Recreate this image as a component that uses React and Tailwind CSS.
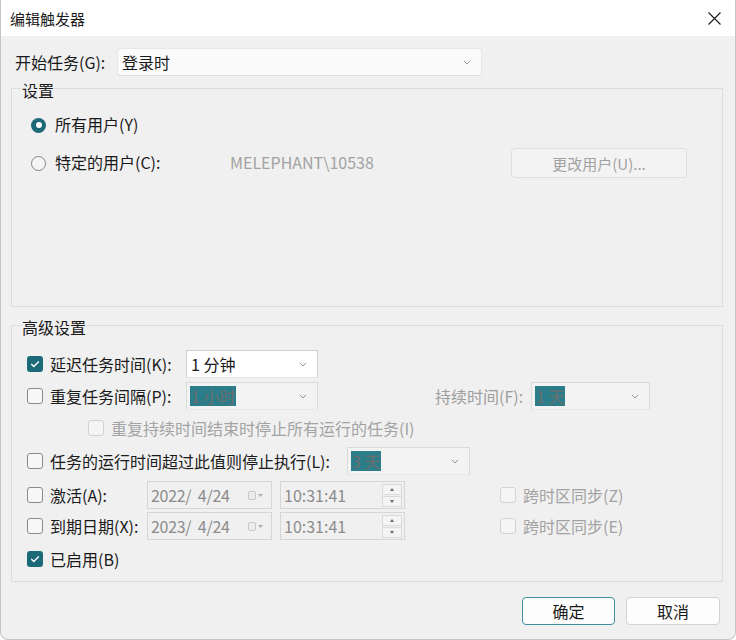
import React from "react";

function Check({ checked, disabled }) {
  if (checked) {
    return (
      <span className="w-4 h-4 rounded-[3px] bg-[#1c6a78] flex items-center justify-center shrink-0">
        <svg width="12" height="12" viewBox="0 0 12 12">
          <path d="M2.3 6.1 L4.8 8.6 L9.8 3.5" fill="none" stroke="white" strokeWidth="1.4" />
        </svg>
      </span>
    );
  }
  return (
    <span
      className={
        disabled
          ? "w-4 h-4 rounded-[3px] border border-[#d3d3d3] bg-[#f5f5f5] shrink-0"
          : "w-4 h-4 rounded-[3px] border border-[#8a8a8a] bg-[#f7f7f7] shrink-0"
      }
    />
  );
}

function Chevron() {
  return (
    <svg width="8" height="5" viewBox="0 0 8 5" className="shrink-0">
      <path d="M0.8 0.8 L4 4 L7.2 0.8" fill="none" stroke="#8a8a8a" strokeWidth="0.9" />
    </svg>
  );
}

function Combo({ w, value, disabled }) {
  return (
    <div
      className={
        disabled
          ? "h-7 border border-[#dadada] border-b-[#e8e8e8] bg-[#f3f3f3] flex items-center pl-[3px] pr-[10px] justify-between shrink-0"
          : "h-7 border border-[#d0d0d0] border-b-[#e4e4e4] bg-white flex items-center pl-[3px] pr-[10px] justify-between shrink-0"
      }
      style={{ width: w }}
    >
      {disabled ? (
        <span className="bg-[#2a7d89] text-[#6e6e6e] h-[20px] leading-[20px] px-[1px] text-[16px]">{value}</span>
      ) : (
        <span className="text-[#1a1a1a] text-[16px] leading-[20px] pl-[1px]">{value}</span>
      )}
      <Chevron />
    </div>
  );
}

function DateBox({ value }) {
  return (
    <div className="w-[125px] h-7 border border-[#d6d6d6] bg-[#f0f0f0] flex items-center pl-[3px] pr-[8px] justify-between shrink-0">
      <span className="text-[#8c8c8c] text-[16px] leading-none whitespace-pre tracking-[-0.3px]">{value}</span>
      <span className="flex items-center gap-[2px]">
        <span className="w-[8px] h-[9px] rounded-[2px] border border-[#c8c8c8] bg-[#ececec]" />
        <svg width="5" height="3" viewBox="0 0 5 3"><path d="M0 0 L5 0 L2.5 3 Z" fill="#b0b0b0" /></svg>
      </span>
    </div>
  );
}

function TimeBox() {
  return (
    <div className="w-[125px] h-7 border border-[#d6d6d6] bg-[#f0f0f0] flex items-center pl-[3px] pr-[2px] justify-between shrink-0">
      <span className="text-[#8c8c8c] text-[16px] leading-none">10:31:41</span>
      <span className="flex flex-col gap-[1px]">
        <span className="w-[20px] h-[11px] border border-[#dadada] bg-[#f4f4f4] flex items-center justify-center">
          <svg width="4" height="3" viewBox="0 0 4 3"><path d="M0 3 L4 3 L2 0 Z" fill="#6a6a6a" /></svg>
        </span>
        <span className="w-[20px] h-[11px] border border-[#dadada] bg-[#f4f4f4] flex items-center justify-center">
          <svg width="4" height="3" viewBox="0 0 4 3"><path d="M0 0 L4 0 L2 3 Z" fill="#6a6a6a" /></svg>
        </span>
      </span>
    </div>
  );
}

function CheckLabel({ checked, disabled, children, w }) {
  return (
    <div className="flex items-center gap-[7px] shrink-0" style={w ? { width: w } : undefined}>
      <Check checked={checked} disabled={disabled} />
      <span className={disabled ? "text-[#a3a3a3] text-[16px] leading-none whitespace-nowrap" : "text-[#1a1a1a] text-[16px] leading-none whitespace-nowrap"}>
        {children}
      </span>
    </div>
  );
}

export default function App() {
  return (
    <div className="w-[736px] h-[640px] bg-white font-['Noto_Sans_CJK_SC','Microsoft_YaHei',sans-serif]">
      <div className="w-[736px] h-[640px] bg-[#f0f0f0] rounded-b-[8px] border-x border-b border-[#c4c4c4] flex flex-col overflow-hidden">
        {/* Title bar */}
        <div className="h-[36px] bg-white flex items-center justify-between pl-[9px] pr-[14px] shrink-0">
          <span className="text-[15px] text-[#1a1a1a] leading-none">编辑触发器</span>
          <svg width="13" height="13" viewBox="0 0 13 13">
            <path d="M0.5 0.5 L12.5 12.5 M12.5 0.5 L0.5 12.5" stroke="#1a1a1a" strokeWidth="1.1" />
          </svg>
        </div>

        <div className="pl-[10px] pr-[12px] flex flex-col">
          {/* Start task row */}
          <div className="mt-[12px] h-7 flex items-center">
            <span className="pl-[4px] w-[106px] text-[16px] text-[#1a1a1a] leading-none whitespace-nowrap">开始任务(G):</span>
            <div className="w-[365px] h-7 bg-[#fafafa] border border-[#e6e6e6] border-b-[#dadada] rounded-[3px] flex items-center justify-between pl-[4px] pr-[10px]">
              <span className="text-[16px] text-[#1a1a1a] leading-none">登录时</span>
              <Chevron />
            </div>
          </div>

          {/* Settings group */}
          <div className="relative mt-[12px] h-[219px] border border-[#dcdcdc] flex flex-col">
            <span className="absolute left-[10px] top-[-7px] bg-[#f0f0f0] text-[16px] leading-[16px] text-[#1a1a1a]">设置</span>
            <div className="mt-[21px] h-[30px] flex items-center pl-[19px] gap-[9px]">
              <span className="w-[15px] h-[15px] rounded-full bg-[#1c6a78] flex items-center justify-center">
                <span className="w-[6px] h-[6px] rounded-full bg-white" />
              </span>
              <span className="text-[16px] text-[#1a1a1a] leading-none pb-[2px]">所有用户(Y)</span>
            </div>
            <div className="mt-[8px] h-[30px] flex items-center pl-[19px]">
              <span className="w-[15px] h-[15px] rounded-full border border-[#858585] bg-[#f5f5f5] shrink-0" />
              <span className="ml-[9px] w-[175px] text-[16px] text-[#1a1a1a] leading-none pb-[3px]">特定的用户(C):</span>
              <span className="w-[281px] text-[16px] text-[#a2a2a2] leading-none pb-[3px]">MELEPHANT\10538</span>
              <div className="w-[176px] h-[30px] border border-[#dedede] rounded-[4px] bg-[#f3f3f3] flex items-center justify-center">
                <span className="text-[15px] text-[#a2a2a2] leading-none">更改用户(U)...</span>
              </div>
            </div>
          </div>

          {/* Advanced group */}
          <div className="relative mt-[18px] h-[257px] border border-[#dcdcdc] flex flex-col pl-[15px]">
            <span className="absolute left-[10px] top-[-7px] bg-[#f0f0f0] text-[16px] leading-[16px] text-[#1a1a1a]">高级设置</span>

            <div className="mt-[24px] h-7 flex items-center">
              <CheckLabel checked w={159}>延迟任务时间(K):</CheckLabel>
              <Combo w={132} value="1 分钟" />
            </div>

            <div className="mt-[4px] h-7 flex items-center">
              <CheckLabel w={159}>重复任务间隔(P):</CheckLabel>
              <Combo w={132} value="1 小时" disabled />
              <span className="ml-[117px] w-[96px] text-[16px] text-[#9e9e9e] leading-none">持续时间(F):</span>
              <Combo w={119} value="1 天" disabled />
            </div>

            <div className="mt-[4px] h-7 flex items-center pl-[61px]">
              <CheckLabel disabled>重复持续时间结束时停止所有运行的任务(I)</CheckLabel>
            </div>

            <div className="mt-[5px] h-7 flex items-center">
              <CheckLabel w={320}>任务的运行时间超过此值则停止执行(L):</CheckLabel>
              <Combo w={123} value="3 天" disabled />
            </div>

            <div className="mt-[6px] h-7 flex items-center">
              <CheckLabel w={120}>激活(A):</CheckLabel>
              <DateBox value="2022/  4/24" />
              <div className="ml-[8px]"><TimeBox /></div>
              <div className="ml-[95px]"><CheckLabel disabled>跨时区同步(Z)</CheckLabel></div>
            </div>

            <div className="mt-[3px] h-7 flex items-center">
              <CheckLabel w={120}>到期日期(X):</CheckLabel>
              <DateBox value="2023/  4/24" />
              <div className="ml-[8px]"><TimeBox /></div>
              <div className="ml-[95px]"><CheckLabel disabled>跨时区同步(E)</CheckLabel></div>
            </div>

            <div className="mt-[5px] h-7 flex items-center">
              <CheckLabel checked>已启用(B)</CheckLabel>
            </div>
          </div>

          {/* Buttons */}
          <div className="mt-[15px] h-7 flex justify-end gap-[11px] pr-[3px]">
            <button className="w-[93px] h-7 rounded-[4px] border border-[#3f8e9b] bg-[#fdfdfd] text-[16px] text-[#1a1a1a] leading-none">确定</button>
            <button className="w-[94px] h-7 rounded-[4px] border border-[#d2d2d2] bg-[#fdfdfd] text-[16px] text-[#1a1a1a] leading-none">取消</button>
          </div>
        </div>
      </div>
    </div>
  );
}
